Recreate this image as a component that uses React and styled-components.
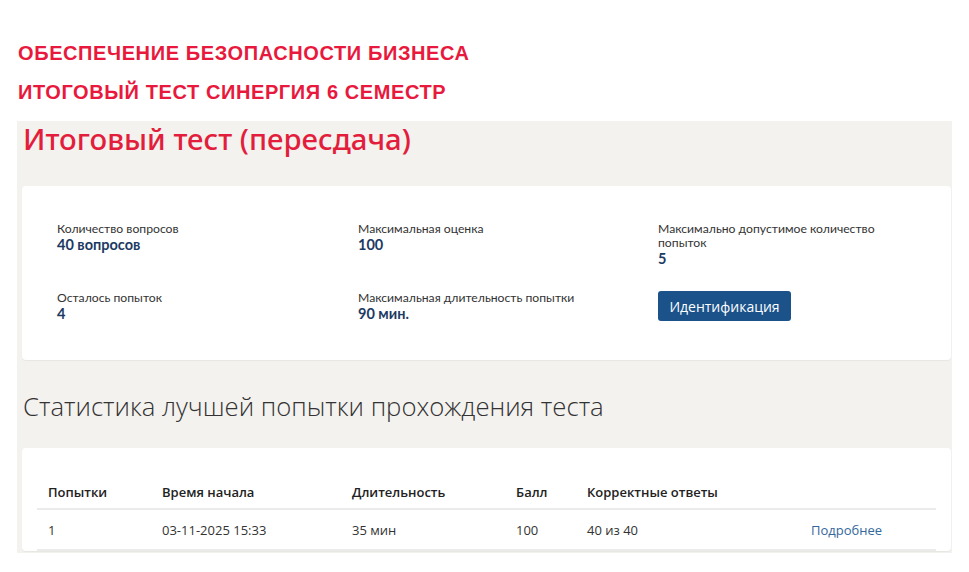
import React from "react";
import styled, { createGlobalStyle } from "styled-components";

const GlobalStyle = createGlobalStyle`
  body {
    margin: 0;
    background: #ffffff;
    font-family: "Open Sans", "Noto Sans", sans-serif;
    color: #333333;
  }
`;

const Page = styled.div`
  width: 969px;
  height: 572px;
  overflow: hidden;
`;

const Banner = styled.div`
  padding: 34px 0 0 18px;
  height: 87px;
`;

const BannerLine = styled.div`
  font-family: "Liberation Sans", Arial, sans-serif;
  font-weight: 700;
  font-size: 20px;
  line-height: 39px;
  letter-spacing: 0.6px;
  color: #e8193c;
`;

const Panel = styled.div`
  margin-left: 17px;
  width: 929px;
  height: 432px;
  padding: 0 1px 0 5px;
  background: #f3f2ef;
`;

const Title = styled.h1`
  margin: 0;
  padding: 0 0 0 1px;
  font-family: "Noto Sans", sans-serif;
  font-weight: 500;
  font-size: 29.3px;
  line-height: 36px;
  color: #e31e3c;
`;

const Card = styled.div`
  background: #ffffff;
  border-radius: 4px;
  box-shadow: 0 1px 1px rgba(0, 0, 0, 0.05);
  padding: ${(p) => p.$pad};
  margin-top: ${(p) => p.$top};
`;

const InfoGrid = styled.div`
  display: grid;
  grid-template-columns: 301px 300px 280px;
  row-gap: 23px;
`;

const Field = styled.div`
  display: flex;
  flex-direction: column;
  align-items: flex-start;
  font-family: Lato, "Open Sans", sans-serif;
`;

const Label = styled.div`
  font-size: 12.2px;
  line-height: 14px;
  color: #333333;
  max-width: 230px;
`;

const Value = styled.div`
  font-size: 14.5px;
  line-height: 18px;
  font-weight: 700;
  color: #1c3a63;
`;

const Button = styled.button`
  width: 133px;
  height: 30px;
  border: none;
  border-radius: 3px;
  background: #1b5289;
  color: #ffffff;
  font-family: "Open Sans", sans-serif;
  font-size: 14px;
  font-weight: 500;
  cursor: pointer;
`;

const SectionTitle = styled.h2`
  margin: 32px 0 0 1px;
  font-family: "Open Sans", sans-serif;
  font-weight: 300;
  font-size: 25.7px;
  line-height: 30px;
  color: #333333;
`;

const Table = styled.table`
  width: 899px;
  border-collapse: collapse;
  table-layout: fixed;
  font-size: 13px;
`;

const Th = styled.th`
  text-align: left;
  font-weight: 600;
  color: #222222;
  padding: 8px 11px 7px;
  line-height: 17px;
  border-bottom: 2px solid #ebebeb;
`;

const Td = styled.td`
  padding: 12px 11px 10px;
  line-height: 17px;
  color: #333333;
  border-bottom: 2px solid #ebebeb;
`;

const Link = styled.a`
  color: #33689c;
  text-decoration: none;
`;

const info = [
  { label: "Количество вопросов", value: "40 вопросов" },
  { label: "Максимальная оценка", value: "100" },
  { label: "Максимально допустимое количество попыток", value: "5" },
  { label: "Осталось попыток", value: "4" },
  { label: "Максимальная длительность попытки", value: "90 мин." },
];

const columns = [
  { title: "Попытки", width: 114 },
  { title: "Время начала", width: 190 },
  { title: "Длительность", width: 164 },
  { title: "Балл", width: 71 },
  { title: "Корректные ответы", width: 224 },
  { title: "", width: 136 },
];

export default function App() {
  return (
    <Page>
      <GlobalStyle />
      <Banner>
        <BannerLine>ОБЕСПЕЧЕНИЕ БЕЗОПАСНОСТИ БИЗНЕСА</BannerLine>
        <BannerLine>ИТОГОВЫЙ ТЕСТ СИНЕРГИЯ 6 СЕМЕСТР</BannerLine>
      </Banner>
      <Panel>
        <Title>Итоговый тест (пересдача)</Title>
        <Card $pad="36px 35px 37px" $top="29px">
          <InfoGrid>
            {info.map((f) => (
              <Field key={f.label}>
                <Label>{f.label}</Label>
                <Value>{f.value}</Value>
              </Field>
            ))}
            <Field>
              <Button>Идентификация</Button>
            </Field>
          </InfoGrid>
        </Card>
        <SectionTitle>Статистика лучшей попытки прохождения теста</SectionTitle>
        <Card $pad="28px 15px 0" $top="26px">
          <Table>
            <colgroup>
              {columns.map((c, i) => (
                <col key={i} style={{ width: c.width }} />
              ))}
            </colgroup>
            <thead>
              <tr>
                {columns.map((c, i) => (
                  <Th key={i}>{c.title}</Th>
                ))}
              </tr>
            </thead>
            <tbody>
              <tr>
                <Td>1</Td>
                <Td>03-11-2025 15:33</Td>
                <Td>35 мин</Td>
                <Td>100</Td>
                <Td>40 из 40</Td>
                <Td>
                  <Link href="#">Подробнее</Link>
                </Td>
              </tr>
            </tbody>
          </Table>
        </Card>
      </Panel>
    </Page>
  );
}
